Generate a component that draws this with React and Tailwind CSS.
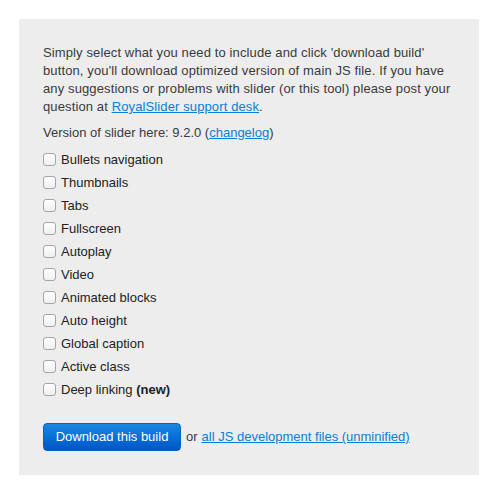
export default function App() {
  const items = [
    "Bullets navigation",
    "Thumbnails",
    "Tabs",
    "Fullscreen",
    "Autoplay",
    "Video",
    "Animated blocks",
    "Auto height",
    "Global caption",
    "Active class",
  ];
  return (
    <div className="w-[495px] h-[489px] bg-white pt-[19px] pl-[19px]" style={{ fontFamily: '"Liberation Sans", Arial, sans-serif' }}>
      <div className="w-[460px] h-[456px] bg-[#ededed] px-[24px] pt-[25px] text-[13px] leading-[18px] text-[#3a3a3a]">
        <p className="tracking-[0.12px]">
          Simply select what you need to include and click 'download build' button, you'll download optimized version of main JS file. If you have any suggestions or problems with slider (or this tool) please post your question at{" "}
          <a href="#" className="text-[#0a7ed6] underline">RoyalSlider support desk</a>.
        </p>
        <p className="mt-[8px]">
          Version of slider here: 9.2.0 (<a href="#" className="text-[#0a7ed6] underline">changelog</a>)
        </p>
        <div className="mt-[6px]">
          {items.map((t) => (
            <div key={t} className="flex items-center h-[23px]">
              <span className="w-[13px] h-[13px] rounded-[3px] border border-[#a5a5a5] bg-gradient-to-b from-white to-[#efefef] mr-[5px]" />
              <span className="text-[#222]">{t}</span>
            </div>
          ))}
          <div className="flex items-center h-[23px]">
            <span className="w-[13px] h-[13px] rounded-[3px] border border-[#a5a5a5] bg-gradient-to-b from-white to-[#efefef] mr-[5px]" />
            <span className="text-[#222]">Deep linking <b>(new)</b></span>
          </div>
        </div>
        <div className="flex items-center mt-[22px]">
          <button className="h-[28px] w-[138px] rounded-[4px] bg-gradient-to-b from-[#1a87e4] to-[#0056c6] border border-[#0a5fbf] text-white text-[13px]">
            Download this build
          </button>
          <span className="ml-[5px]">or</span>
          <a href="#" className="ml-[4px] text-[#0a7ed6] underline">all JS development files (unminified)</a>
        </div>
      </div>
    </div>
  );
}
